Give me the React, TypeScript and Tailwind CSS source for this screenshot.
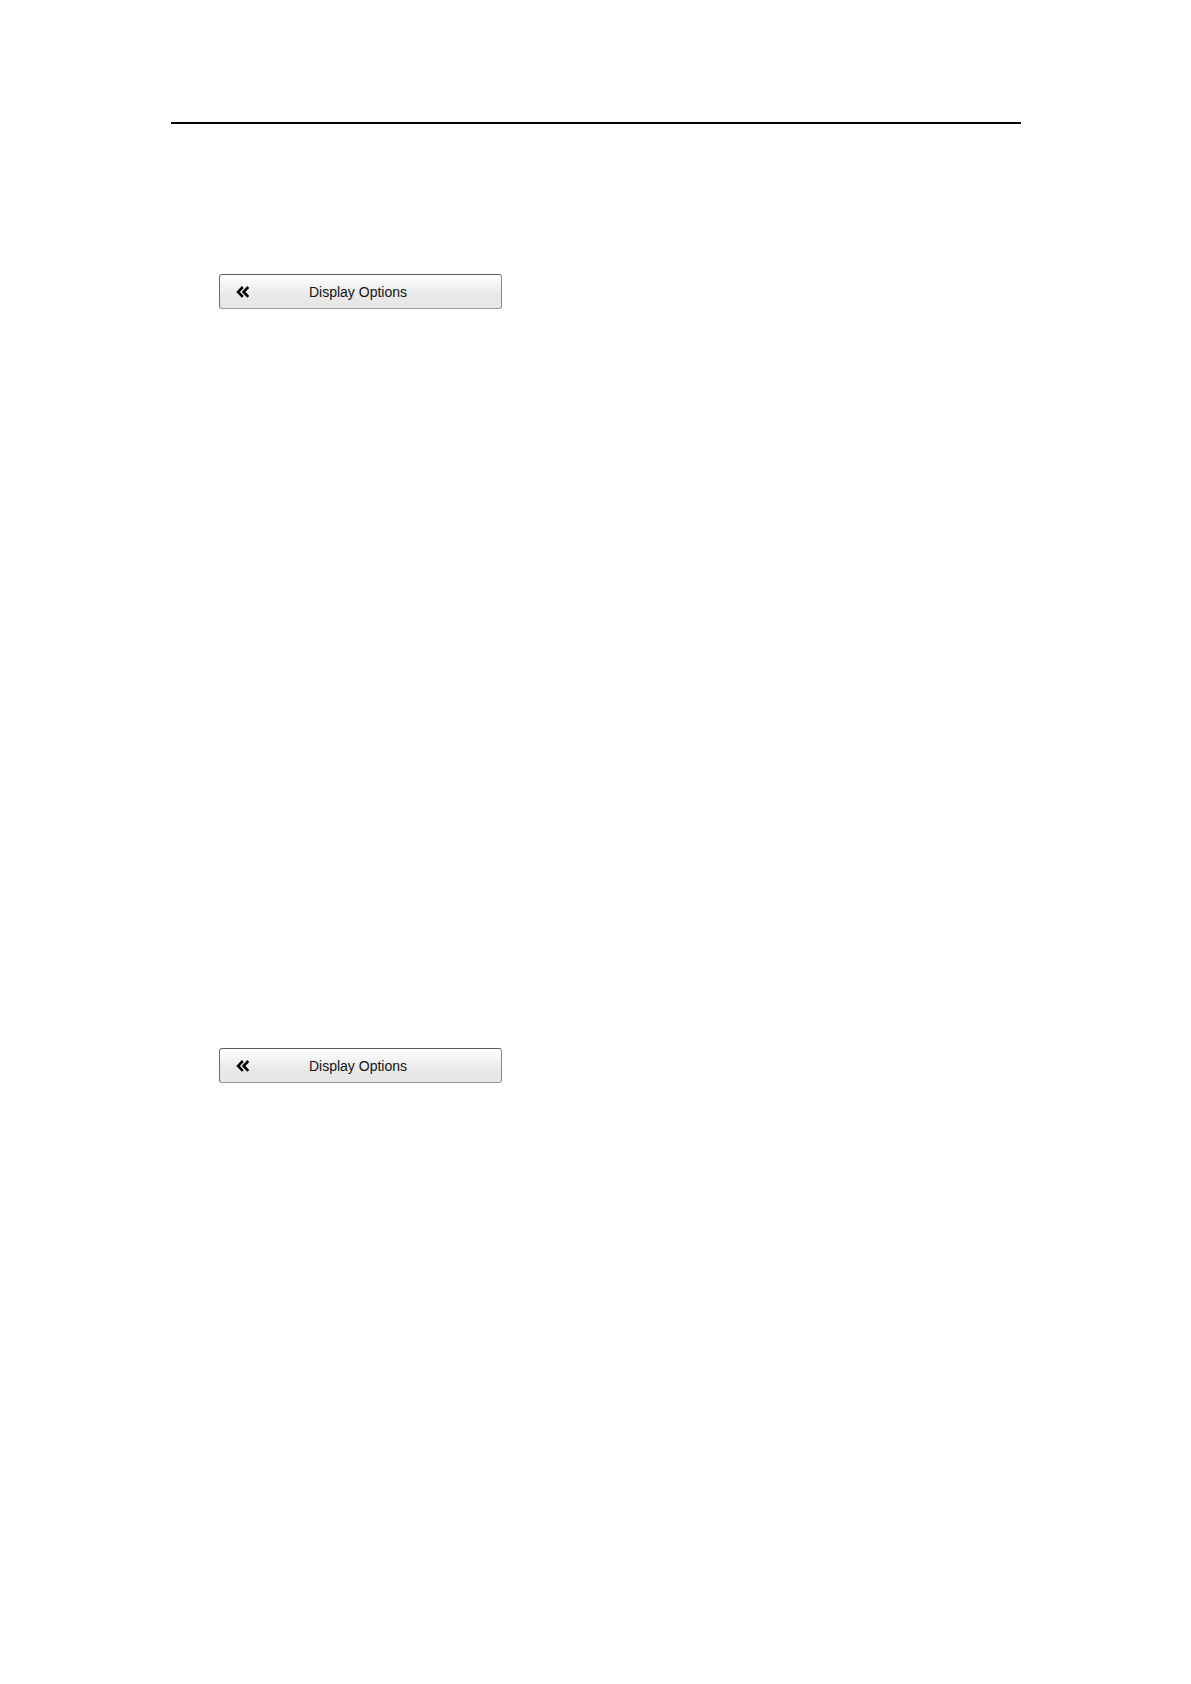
function DoubleChevronLeft() {
  return (
    <svg
      className="h-3 w-[13px] shrink-0"
      viewBox="0 0 13 12"
      fill="none"
      stroke="#000"
      strokeWidth="2.6"
      aria-hidden="true"
    >
      <path d="M6.8 1 L2.1 5.9 L6.8 10.8" />
      <path d="M12.3 1 L7.6 5.9 L12.3 10.8" />
    </svg>
  );
}

function MenuButton({ label }: { label: string }) {
  return (
    <button
      type="button"
      className="flex h-[35px] w-[283px] items-center rounded-[3px] border border-t-[#5c5c5c] border-r-[#8a8a8a] border-b-[#9a9a9a] border-l-[#6c6c6c] bg-linear-to-b from-white via-[#e9e9e9] via-60% to-[#e6e6e6] pr-[34px] pl-4 text-sm text-[#141414]"
    >
      <DoubleChevronLeft />
      <span className="flex-1 text-center">{label}</span>
    </button>
  );
}

export default function App() {
  return (
    <div className="min-h-screen bg-white pt-[122px] pr-[170px] pl-[171px] font-['Liberation_Sans',Arial,sans-serif]">
      <hr className="border-t-2 border-black" />
      <main className="flex flex-col items-start gap-[739px] pt-[150px] pl-12">
        <MenuButton label="Display Options" />
        <MenuButton label="Display Options" />
      </main>
    </div>
  );
}
